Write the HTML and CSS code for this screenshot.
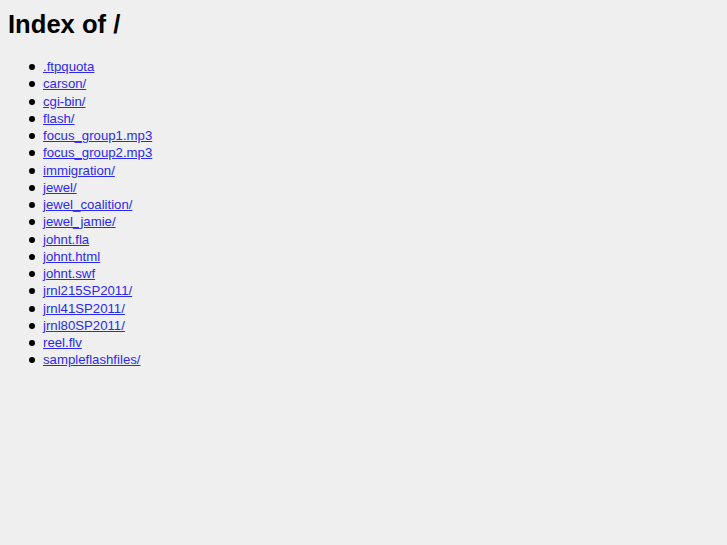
FILE: index.html
```html
<!DOCTYPE html>
<html>
<head>
    <meta charset="UTF-8">
    <title>Index of /</title>
    <link rel="stylesheet" href="styles.css">
</head>
<body>
    <h1>Index of /</h1>
    <ul class="listing">
        <li><a href="/.ftpquota">.ftpquota</a></li>
        <li><a href="/carson/">carson/</a></li>
        <li><a href="/cgi-bin/">cgi-bin/</a></li>
        <li><a href="/flash/">flash/</a></li>
        <li><a href="/focus_group1.mp3">focus_group1.mp3</a></li>
        <li><a href="/focus_group2.mp3">focus_group2.mp3</a></li>
        <li><a href="/immigration/">immigration/</a></li>
        <li><a href="/jewel/">jewel/</a></li>
        <li><a href="/jewel_coalition/">jewel_coalition/</a></li>
        <li><a href="/jewel_jamie/">jewel_jamie/</a></li>
        <li><a href="/johnt.fla">johnt.fla</a></li>
        <li><a href="/johnt.html">johnt.html</a></li>
        <li><a href="/johnt.swf">johnt.swf</a></li>
        <li><a href="/jrnl215SP2011/">jrnl215SP2011/</a></li>
        <li><a href="/jrnl41SP2011/">jrnl41SP2011/</a></li>
        <li><a href="/jrnl80SP2011/">jrnl80SP2011/</a></li>
        <li><a href="/reel.flv">reel.flv</a></li>
        <li><a href="/sampleflashfiles/">sampleflashfiles/</a></li>
    </ul>
</body>
</html>
```

FILE: styles.css
```css
body {
    margin: 0;
    padding: 10px 8px;
    background-color: #efefef;
    color: #000;
    font-family: 'Liberation Sans', Arial, sans-serif;
    font-size: 13.2px;
}

h1 {
    margin: 0;
    font-size: 25.6px;
    line-height: 29px;
    font-weight: bold;
}

.listing {
    margin: 19px 0 0;
    padding-left: 35px;
    line-height: 17.25px;
    list-style: none;
}

.listing li::before {
    content: "";
    display: inline-block;
    width: 6px;
    height: 6px;
    border-radius: 50%;
    background-color: #000;
    margin-left: -14px;
    margin-right: 8px;
    vertical-align: 1px;
}

.listing a {
    color: #2a2aee;
}
```
